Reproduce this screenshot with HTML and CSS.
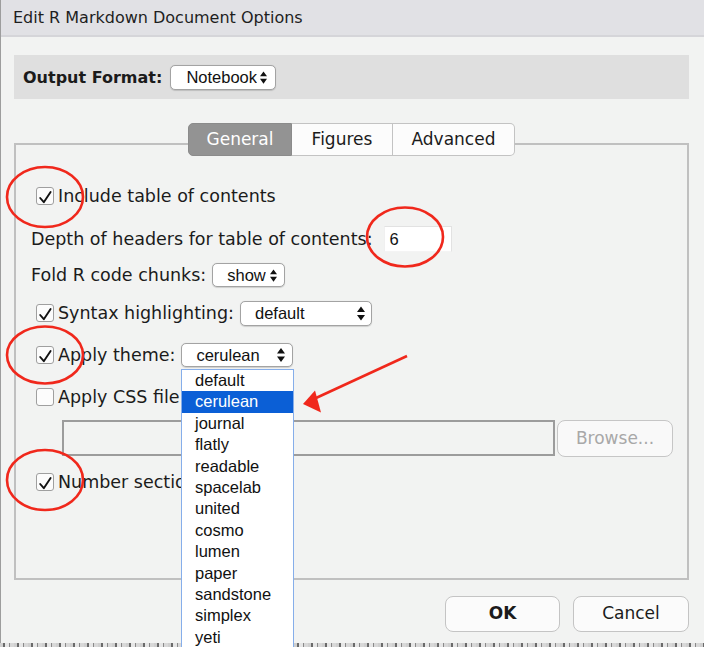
FILE: index.html
```html
<!DOCTYPE html>
<html>
<head>
<meta charset="utf-8">
<link rel="stylesheet" href="styles.css">
</head>
<body>
<div class="dialog">
  <div class="titlebar">Edit R Markdown Document Options</div>
  <div class="content">
    <div class="band">
      <span class="band-label">Output Format:</span>
      <div class="select sel-notebook"><span>Notebook</span><svg class="arrows" viewBox="0 0 8 14" width="7" height="13"><path d="M0 5.5 L4 0 L8 5.5 Z M0 8.5 L8 8.5 L4 14 Z" fill="#111"/></svg></div>
    </div>
    <div class="tabs">
      <div class="tab tab-general active">General</div>
      <div class="tab tab-figures">Figures</div>
      <div class="tab tab-advanced">Advanced</div>
    </div>
    <div class="panel">
      <div class="row r-toc cbrow">
        <span class="cb"><svg viewBox="0 0 18 18" width="18" height="18"><path d="M4.2 11 L7.8 15.2 L14.6 5" fill="none" stroke="#111" stroke-width="1.9" stroke-linecap="round" stroke-linejoin="round"/></svg></span>
        <span>Include table of contents</span>
      </div>
      <div class="row r-depth">
        <span>Depth of headers for table of contents:</span>
        <div class="numbox">6</div>
      </div>
      <div class="row r-fold">
        <span>Fold R code chunks:</span>
        <div class="select sel-show"><span>show</span><svg class="arrows" viewBox="0 0 8 14" width="7" height="13"><path d="M0 5.5 L4 0 L8 5.5 Z M0 8.5 L8 8.5 L4 14 Z" fill="#111"/></svg></div>
      </div>
      <div class="row r-syntax cbrow">
        <span class="cb"><svg viewBox="0 0 18 18" width="18" height="18"><path d="M4.2 11 L7.8 15.2 L14.6 5" fill="none" stroke="#111" stroke-width="1.9" stroke-linecap="round" stroke-linejoin="round"/></svg></span>
        <span>Syntax highlighting:</span>
        <div class="select sel-default"><span>default</span><svg class="arrows" viewBox="0 0 8 14" width="8" height="15"><path d="M0 5.5 L4 0 L8 5.5 Z M0 8.5 L8 8.5 L4 14 Z" fill="#111"/></svg></div>
      </div>
      <div class="row r-theme cbrow">
        <span class="cb"><svg viewBox="0 0 18 18" width="18" height="18"><path d="M4.2 11 L7.8 15.2 L14.6 5" fill="none" stroke="#111" stroke-width="1.9" stroke-linecap="round" stroke-linejoin="round"/></svg></span>
        <span>Apply theme:</span>
        <div class="select sel-theme"><span>cerulean</span><svg class="arrows" viewBox="0 0 8 14" width="8" height="14"><path d="M0 5.5 L4 0 L8 5.5 Z M0 8.5 L8 8.5 L4 14 Z" fill="#111"/></svg></div>
      </div>
      <div class="row r-css cbrow">
        <span class="cb"></span>
        <span>Apply CSS file:</span>
      </div>
      <div class="row r-file">
        <div class="filebox"></div>
        <div class="browse">Browse...</div>
      </div>
      <div class="row r-num cbrow">
        <span class="cb"><svg viewBox="0 0 18 18" width="18" height="18"><path d="M4.2 11 L7.8 15.2 L14.6 5" fill="none" stroke="#111" stroke-width="1.9" stroke-linecap="round" stroke-linejoin="round"/></svg></span>
        <span>Number sections</span>
      </div>
    </div>
    <div class="buttons">
      <div class="btn ok">OK</div>
      <div class="btn">Cancel</div>
    </div>
  </div>
</div>
<div class="under"></div>

<ul class="popup">
  <li>default</li>
  <li class="hl">cerulean</li>
  <li>journal</li>
  <li>flatly</li>
  <li>readable</li>
  <li>spacelab</li>
  <li>united</li>
  <li>cosmo</li>
  <li>lumen</li>
  <li>paper</li>
  <li>sandstone</li>
  <li>simplex</li>
  <li>yeti</li>
</ul>

<svg class="marks" width="704" height="647" viewBox="0 0 704 647">
  <g fill="none" stroke="#f0281c" stroke-width="2.6">
    <ellipse cx="45" cy="197" rx="38" ry="30"/>
    <ellipse cx="405" cy="237" rx="38" ry="29.5"/>
    <ellipse cx="45" cy="355" rx="38" ry="28.5"/>
    <ellipse cx="45" cy="480" rx="38" ry="30"/>
    <line x1="407" y1="356" x2="316" y2="398"/>
  </g>
  <path d="M303 404 L315 390.5 L321 412.5 Z" fill="#f0281c"/>
</svg>
</body>
</html>
```

FILE: styles.css
```css
html, body {
  margin: 0;
  padding: 0;
}

body {
  width: 704px;
  height: 647px;
  overflow: hidden;
  position: relative;
  background: #dcdcdc;
  font-family: "DejaVu Sans", sans-serif;
  color: #1b1b1b;
}

.dialog {
  height: 643px;
  box-sizing: border-box;
  background: #f2f3f2;
  border-left: 1px solid #9d9d9d;
}

.titlebar {
  height: 35px;
  line-height: 35px;
  border-bottom: 2px solid #d5d5d9;
  background: #e1e1e5;
  font-size: 16px;
  padding-left: 12px;
  color: #1e1e1e;
}

.content {
  padding: 18px 15px 0 13px;
}

.band {
  height: 44px;
  background: #dfdfdf;
  display: flex;
  align-items: center;
  padding-left: 9px;
}

.band-label {
  font-weight: bold;
  font-size: 16px;
  margin-right: 8px;
}

.select {
  display: flex;
  align-items: center;
  justify-content: space-between;
  box-sizing: border-box;
  height: 24px;
  border: 1px solid #a3a3a3;
  border-radius: 5px;
  background: #fff;
  font-family: "Liberation Sans", Arial, sans-serif;
  font-size: 16.5px;
  color: #111;
  padding: 0 7px 0 14px;
  box-shadow: 0 0.5px 1px rgba(0,0,0,0.15);
}

.select span {
  white-space: nowrap;
  overflow: hidden;
}

.arrows {
  flex: none;
  display: block;
}

.sel-notebook {
  width: 106px;
  height: 25px;
  padding-left: 15px;
  padding-right: 8px;
}

.sel-show {
  width: 73px;
  margin-left: 6px;
}

.sel-default {
  width: 132px;
  height: 25px;
  margin-left: 6px;
  padding-right: 6px;
}

.sel-theme {
  width: 112px;
  margin-left: 6px;
}

.tabs {
  display: flex;
  justify-content: center;
  margin-top: 24px;
  margin-bottom: -13px;
  position: relative;
  z-index: 1;
}

.tab {
  height: 33px;
  box-sizing: border-box;
  border: 1.5px solid #c3c3c3;
  border-left: none;
  background: #fcfcfc;
  font-size: 17px;
  line-height: 30px;
  text-align: center;
  color: #1b1b1b;
}

.tab-general { width: 104px; }
.tab-figures { width: 101px; }
.tab-advanced { width: 122px; }

.tab:first-child {
  border-left: 1.5px solid #c3c3c3;
  border-radius: 5px 0 0 5px;
}

.tab:last-child {
  border-radius: 0 5px 5px 0;
}

.tab.active {
  background: #939393;
  color: #fff;
  border-color: #8b8b8b;
}

.panel {
  border: 2px solid #c0c0c0;
  padding: 30px 0 71px 15px;
}

.row {
  display: flex;
  align-items: center;
  font-size: 17.5px;
  white-space: nowrap;
}

.cbrow {
  padding-left: 5px;
}

.cb {
  width: 18px;
  height: 18px;
  box-sizing: border-box;
  border: 1.5px solid #9f9f9f;
  border-radius: 3px;
  background: #fcfcfc;
  margin-right: 4px;
  flex: none;
  position: relative;
}

.cb svg {
  display: block;
  margin: -1.5px 0 0 -1.5px;
}

.r-toc { height: 42px; }
.r-depth { height: 43px; }
.r-fold { height: 30px; }
.r-syntax { height: 46px; }
.r-theme { height: 38px; }
.r-css { height: 46px; }
.r-file { height: 38px; margin-top: -1px; }
.r-num { height: 50px; }

.numbox {
  width: 68px;
  height: 26px;
  box-sizing: border-box;
  margin-left: 11px;
  background: #fff;
  border: 1px solid #e2e2e2;
  border-left-color: #f0f0f0;
  border-bottom-color: #f4f4f4;
  font-family: "Liberation Sans", Arial, sans-serif;
  font-size: 16.5px;
  line-height: 24px;
  padding-left: 5px;
  color: #111;
}

.filebox {
  width: 493px;
  height: 36px;
  box-sizing: border-box;
  margin-left: 31px;
  border: 2px solid #9c9c9c;
}

.browse {
  width: 116px;
  height: 37px;
  box-sizing: border-box;
  margin-left: 2px;
  border: 1.5px solid #c6c6c6;
  border-radius: 8px;
  background: #f9f9f9;
  color: #a8a8a8;
  font-size: 17px;
  line-height: 34px;
  text-align: center;
}

.buttons {
  display: flex;
  justify-content: flex-end;
  gap: 13px;
  margin-top: 16px;
}

.btn {
  width: 116px;
  height: 36px;
  box-sizing: border-box;
  border: 1.5px solid #c4c4c4;
  border-radius: 8px;
  background: #fbfbfb;
  font-size: 17px;
  line-height: 33px;
  text-align: center;
  color: #1b1b1b;
}

.btn.ok {
  font-weight: bold;
  width: 115px;
}

.under {
  height: 4px;
  background: repeating-linear-gradient(90deg, #cfcfcf 0 3px, #6a6a6a 3px 5px, #e6e6e6 5px 9px, #8a8a8a 9px 10px, #d8d8d8 10px 14px);
}

.popup {
  position: absolute;
  left: 181px;
  top: 369px;
  width: 113px;
  height: 290px;
  box-sizing: border-box;
  margin: 0;
  padding: 0;
  list-style: none;
  background: #fff;
  border: 1px solid #86aeea;
  font-family: "Liberation Sans", Arial, sans-serif;
  font-size: 16.5px;
  color: #111;
  z-index: 5;
}

.popup li {
  height: 21.4px;
  line-height: 21.4px;
  padding-left: 13px;
}

.popup li.hl {
  background: #0b5fd6;
  color: #fff;
}

.marks {
  position: absolute;
  left: 0;
  top: 0;
  z-index: 10;
  pointer-events: none;
}
```
